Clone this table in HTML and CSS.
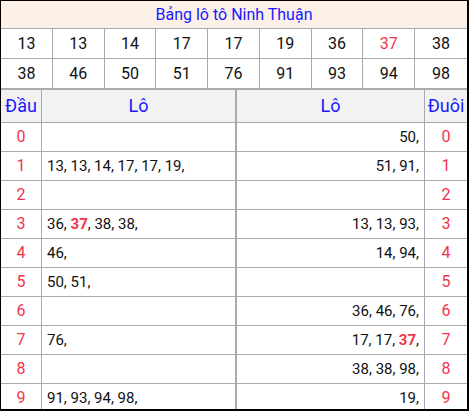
FILE: index.html
```html
<!DOCTYPE html>
<html>
<head>
<meta charset="utf-8">
<link rel="stylesheet" href="styles.css">
</head>
<body>
<div class="frame">
  <div class="title">Bảng lô tô Ninh Thuận</div>
  <div class="nums">
    <div class="n">13</div><div class="n">13</div><div class="n">14</div><div class="n">17</div><div class="n">17</div><div class="n">19</div><div class="n">36</div><div class="n red">37</div><div class="n">38</div>
    <div class="n r2">38</div><div class="n r2">46</div><div class="n r2">50</div><div class="n r2">51</div><div class="n r2">76</div><div class="n r2">91</div><div class="n r2">93</div><div class="n r2">94</div><div class="n r2">98</div>
  </div>
  <div class="lo">
    <div class="h c1">Đầu</div><div class="h c2">Lô</div><div class="h c3">Lô</div><div class="h c4">Đuôi</div>

    <div class="d c1">0</div><div class="l c2"></div><div class="rt c3">50,</div><div class="d c4">0</div>
    <div class="d c1">1</div><div class="l c2">13, 13, 14, 17, 17, 19,</div><div class="rt c3">51, 91,</div><div class="d c4">1</div>
    <div class="d c1">2</div><div class="l c2"></div><div class="rt c3"></div><div class="d c4">2</div>
    <div class="d c1">3</div><div class="l c2">36, <b class="hot">37</b>, 38, 38,</div><div class="rt c3">13, 13, 93,</div><div class="d c4">3</div>
    <div class="d c1">4</div><div class="l c2">46,</div><div class="rt c3">14, 94,</div><div class="d c4">4</div>
    <div class="d c1">5</div><div class="l c2">50, 51,</div><div class="rt c3"></div><div class="d c4">5</div>
    <div class="d c1">6</div><div class="l c2"></div><div class="rt c3">36, 46, 76,</div><div class="d c4">6</div>
    <div class="d c1">7</div><div class="l c2">76,</div><div class="rt c3">17, 17, <b class="hot">37</b>,</div><div class="d c4">7</div>
    <div class="d c1">8</div><div class="l c2"></div><div class="rt c3">38, 38, 98,</div><div class="d c4">8</div>
    <div class="d c1">9</div><div class="l c2">91, 93, 94, 98,</div><div class="rt c3">19,</div><div class="d c4">9</div>
  </div>
</div>
</body>
</html>
```
FILE: styles.css
```css
html, body { margin: 0; padding: 0; background: #fff; }
body { font-family: Roboto, "Liberation Sans", sans-serif; color: #111; }
.frame {
  width: 469px; height: 411px; box-sizing: border-box;
  border-style: solid; border-color: #000; border-width: 1px 2px 2px 1px;
  overflow: hidden;
}
.title {
  height: 27px; line-height: 27px; text-align: center;
  background: #fdf0e6; color: #1a1aff; font-size: 16px;
  border-bottom: 1px solid #aaa;
}
.nums { display: grid; grid-template-columns: repeat(9, 1fr); }
.n {
  height: 29px; line-height: 29px; text-align: center; font-size: 16px;
  border-right: 1px solid #aaa; border-bottom: 1px solid #aaa;
}
.n:nth-child(9n) { border-right: none; }
.n.r2 { border-bottom-width: 2px; }
.red { color: #f2334b; }
.lo { display: grid; grid-template-columns: 41px 195px 188px 42px; }
.lo > div {
  height: 28px; line-height: 28px; border-bottom: 1px solid #aaa;
  box-sizing: content-box; font-size: 15px; white-space: nowrap;
}
.lo > .c1, .lo > .c3 { border-right: 1px solid #aaa; }
.lo > .c2 { border-right: 2px solid #aaa; }
.lo > .h {
  height: 32px; line-height: 32px; background: #f2f2f2; color: #1a1aff;
  font-size: 18px; text-align: center;
}
.d { text-align: center; color: #f2334b; font-size: 16px !important; }
.l { padding-left: 5px; }
.rt { text-align: right; padding-right: 5px; }
.lo > .l, .lo > .rt { width: auto; }
.hot { color: #f2334b; font-weight: 700; }
```
